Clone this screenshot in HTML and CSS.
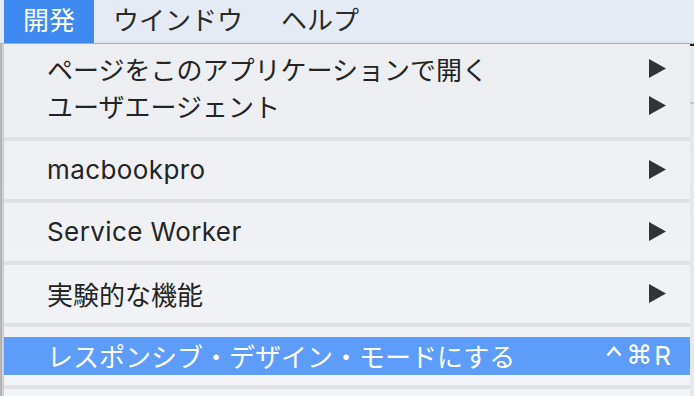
FILE: index.html
```html
<!DOCTYPE html>
<html lang="ja">
<head>
    <meta charset="UTF-8">
    <title>開発メニュー</title>
    <link rel="stylesheet" href="styles.css">
</head>
<body>
    <div class="menubar">
        <span class="menubar-item active">開発</span>
        <span class="menubar-item">ウインドウ</span>
        <span class="menubar-item">ヘルプ</span>
    </div>
    <div class="screen">
        <div class="edge edge-left"></div>
        <div class="menu">
            <div class="section first">
                <div class="item">
                    <span>ページをこのアプリケーションで開く</span>
                    <svg class="arrow" width="17" height="19" viewBox="0 0 17 19"><polygon points="0,0 17,9.5 0,19"/></svg>
                </div>
                <div class="item">
                    <span>ユーザエージェント</span>
                    <svg class="arrow" width="17" height="19" viewBox="0 0 17 19"><polygon points="0,0 17,9.5 0,19"/></svg>
                </div>
            </div>
            <div class="separator"></div>
            <div class="section">
                <div class="item">
                    <span class="latin">macbookpro</span>
                    <svg class="arrow" width="17" height="19" viewBox="0 0 17 19"><polygon points="0,0 17,9.5 0,19"/></svg>
                </div>
            </div>
            <div class="separator"></div>
            <div class="section">
                <div class="item">
                    <span class="latin">Service Worker</span>
                    <svg class="arrow" width="17" height="19" viewBox="0 0 17 19"><polygon points="0,0 17,9.5 0,19"/></svg>
                </div>
            </div>
            <div class="separator"></div>
            <div class="section">
                <div class="item">
                    <span>実験的な機能</span>
                    <svg class="arrow" width="17" height="19" viewBox="0 0 17 19"><polygon points="0,0 17,9.5 0,19"/></svg>
                </div>
            </div>
            <div class="separator"></div>
            <div class="section">
                <div class="item selected">
                    <span>レスポンシブ・デザイン・モードにする</span>
                    <span class="shortcut">
                        <svg class="ctrl" width="16" height="11" viewBox="0 0 16 11"><polyline points="1.5,9.5 8,2 14.5,9.5"/></svg>
                        <span class="key-glyph">⌘</span>R
                    </span>
                </div>
            </div>
            <div class="separator"></div>
        </div>
        <div class="edge edge-right"></div>
    </div>
</body>
</html>
```

FILE: styles.css
```css
body {
    margin: 0;
    padding: 0;
    width: 694px;
    height: 396px;
    overflow: hidden;
    font-family: Inter, "Noto Sans CJK JP", "DejaVu Sans", sans-serif;
    font-size: 26px;
    color: #242424;
    background-color: #e9eaec;
}

.menubar {
    display: flex;
    height: 43px;
    padding-left: 4px;
    background-color: #e5ebf4;
    border-bottom: 1px solid #afb2b7;
}

.menubar-item {
    padding: 0 19px;
    line-height: 42px;
    color: #2a2a2a;
}

.menubar-item.active {
    background-color: #3e8af1;
    color: #fff;
}

.screen {
    display: flex;
    height: 352px;
}

.edge {
    width: 4px;
}

.edge-left {
    background: linear-gradient(to right, #b9b9b9 0, #b9b9b9 2px, #dcdcdc 2px);
}

.edge-right {
    background: linear-gradient(to bottom, #222 0, #222 2px, #e6e8ea 2px, #e6e8ea 58px, #c4c6c9 58px, #c4c6c9 60px, #e6e8ea 60px);
}

.menu {
    flex: 1;
    background: linear-gradient(to bottom, #eceef1, #f2f4f7);
    box-shadow: 0 2px 6px rgba(0, 0, 0, 0.15);
}

.section {
    padding: 10px 0;
}

.section.first {
    padding: 7px 0 12px;
}

.item {
    box-sizing: border-box;
    display: flex;
    align-items: center;
    justify-content: space-between;
    height: 38px;
    padding: 0 24px 2px 43px;
}

.section.first .item {
    height: 37px;
}

.latin {
    letter-spacing: 0.4px;
}

.arrow {
    fill: #333;
}

.item.selected {
    background-color: #5d9cf8;
    color: #fff;
    padding-right: 19px;
}

.shortcut {
    display: flex;
    align-items: center;
    gap: 2px;
}

.ctrl {
    fill: none;
    stroke: #fff;
    stroke-width: 2.6;
    margin-bottom: 8px;
    margin-right: 2px;
}

.key-glyph {
    font-family: "DejaVu Sans", sans-serif;
    font-size: 26px;
}

.separator {
    height: 4px;
    background-color: #dfe1e4;
}
```
